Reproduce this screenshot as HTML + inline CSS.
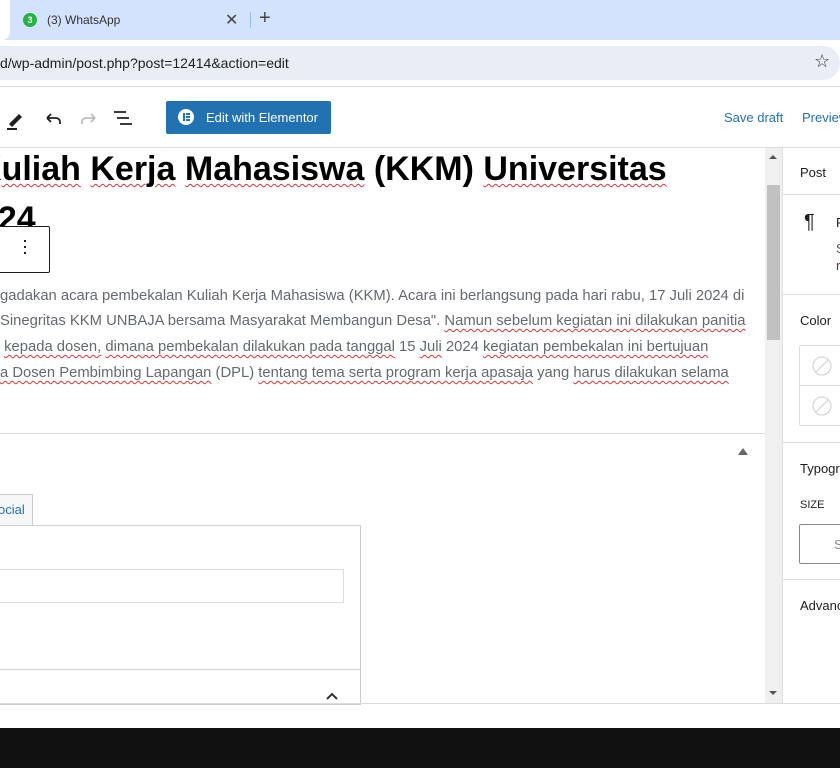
<!DOCTYPE html>
<html><head><meta charset="utf-8"><style>
*{margin:0;padding:0;box-sizing:border-box}
body{width:840px;height:768px;overflow:hidden;background:#fff;font-family:"Liberation Sans",sans-serif;position:relative}
.a{position:absolute;white-space:nowrap}
.p{font-size:14.8px;color:#646970;left:0}
.w{text-decoration:underline wavy #d63638;text-decoration-thickness:1px;text-underline-offset:3px}
</style></head><body>
<div class="a" style="left:0;top:0;width:840px;height:40px;background:#d3e3fd"></div>
<div class="a" style="left:0;top:0;width:10px;height:40px;background:#fff;border-bottom-right-radius:8px"></div>
<div class="a" style="left:23px;top:13px;width:14px;height:14px;border-radius:50%;background:#25b33e;color:#fff;font-size:9px;font-weight:bold;text-align:center;line-height:14px">3</div>
<div class="a" style="left:47px;top:13px;font-size:12px;color:#333">(3) WhatsApp</div>
<div class="a" style="left:225px;top:10px;font-size:16px;color:#444">✕</div>
<div class="a" style="left:250px;top:12px;width:1px;height:16px;background:#9ab9ee"></div>
<div class="a" style="left:259px;top:7px;font-size:20px;color:#444">+</div>
<div class="a" style="left:0;top:40px;width:840px;height:47px;background:#fff"></div>
<div class="a" style="left:-20px;top:46px;width:860px;height:34px;background:#e9eef6;border-radius:17px"></div>
<div class="a" style="left:0;top:55px;font-size:14px;color:#222">d/wp-admin/post.php?post=12414&amp;action=edit</div>
<div class="a" style="left:814px;top:51px;font-size:18px;color:#333">☆</div>
<div class="a" style="left:0;top:86px;width:840px;height:1px;background:#ddd"></div>
<svg class="a" style="left:0;top:104px" width="140" height="28">
<path d="M9 20 L19 10 L22 13 L12 23 Z" fill="#1e1e1e"/><rect x="7" y="24" width="10" height="2" fill="#1e1e1e"/>
<path d="M47 14 h9 a4 4 0 0 1 4 4 v2 M47 14 l4 -4 M47 14 l4 4" stroke="#1e1e1e" stroke-width="1.8" fill="none"/>
<path d="M95 14 h-9 a4 4 0 0 0 -4 4 v2 M95 14 l-4 -4 M95 14 l-4 4" stroke="#bbb" stroke-width="1.8" fill="none"/>
<path d="M114 8h12M117 14h12M120 20h12" stroke="#1e1e1e" stroke-width="1.8"/>
</svg>
<div class="a" style="left:166px;top:101px;width:165px;height:33px;background:#2271b1;border-radius:2px"></div>
<div class="a" style="left:178px;top:109px;width:16px;height:16px;border-radius:50%;background:#fff"></div>
<div class="a" style="left:183px;top:113px;width:2px;height:8px;background:#2271b1"></div>
<div class="a" style="left:186px;top:113px;width:4px;height:2px;background:#2271b1;box-shadow:0 3px #2271b1,0 6px #2271b1"></div>
<div class="a" style="left:206px;top:110px;font-size:13px;color:#fff">Edit with Elementor</div>
<div class="a" style="left:724px;top:110px;font-size:13px;color:#2271b1">Save draft</div>
<div class="a" style="left:802px;top:110px;font-size:13px;color:#2271b1">Preview</div>
<div class="a" style="left:0;top:147px;width:840px;height:1px;background:#ddd"></div>
<div class="a" style="left:-23px;top:150px;font-size:34px;font-weight:bold;color:#000">K<span class="w">uliah</span> <span class="w">Kerja</span> <span class="w">Mahasiswa</span> (KKM) <span class="w">Universitas</span></div>
<div class="a" style="left:-40px;top:200px;font-size:34px;font-weight:bold;color:#000">2024</div>
<div class="a" style="left:0;top:226px;width:50px;height:47px;background:#fff;border:1px solid #1e1e1e;border-left:none;border-radius:0 2px 2px 0"></div>
<div class="a" style="left:24px;top:240px;width:2px;height:2px;background:#1e1e1e;box-shadow:0 6px #1e1e1e,0 12px #1e1e1e"></div>
<div class="a p" style="top:288px">gadakan acara pembekalan Kuliah Kerja Mahasiswa (KKM). Acara ini berlangsung pada hari rabu, 17 Juli 2024 di</div>
<div class="a p" style="top:313px">Sinegritas KKM UNBAJA bersama Masyarakat Membangun Desa". <span class="w">Namun sebelum kegiatan ini dilakukan panitia</span></div>
<div class="a p" style="top:339px">&nbsp;<span class="w">kepada dosen,</span> <span class="w">dimana pembekalan dilakukan pada tanggal</span> 15 <span class="w">Juli</span> 2024 <span class="w">kegiatan pembekalan ini bertujuan</span></div>
<div class="a p" style="top:365px"><span class="w">a Dosen Pembimbing Lapangan</span> (DPL) <span class="w">tentang tema serta program kerja apasaja</span> yang <span class="w">harus dilakukan selama</span></div>
<div class="a" style="left:0;top:433px;width:765px;height:1px;background:#ddd"></div>
<div class="a" style="left:738px;top:448px;width:0;height:0;border-left:5px solid transparent;border-right:5px solid transparent;border-bottom:7px solid #666"></div>
<div class="a" style="left:0;top:494px;width:33px;height:32px;background:#f6f7f7;border:1px solid #ccc;border-left:none;border-bottom:none"></div>
<div class="a" style="left:-2px;top:502px;font-size:13px;color:#2271b1">ocial</div>
<div class="a" style="left:0;top:525px;width:361px;height:180px;border:1px solid #ccc;border-left:none"></div>
<div class="a" style="left:0;top:569px;width:344px;height:34px;border:1px solid #ddd;border-left:none"></div>
<div class="a" style="left:0;top:669px;width:361px;height:1px;background:#ccc"></div>
<svg class="a" style="left:325px;top:691px" width="14" height="10"><path d="M2 8 L7 3 L12 8" stroke="#333" stroke-width="2" fill="none"/></svg>
<div class="a" style="left:765px;top:148px;width:17px;height:555px;background:#f0f0f0"></div>
<div class="a" style="left:767px;top:185px;width:13px;height:155px;background:#c1c1c1"></div>
<div class="a" style="left:769px;top:155px;border-left:4px solid transparent;border-right:4px solid transparent;border-bottom:4px solid #555"></div>
<div class="a" style="left:769px;top:691px;border-left:4px solid transparent;border-right:4px solid transparent;border-top:4px solid #555"></div>
<div class="a" style="left:782px;top:148px;width:1px;height:555px;background:#e0e0e0"></div>
<div class="a" style="left:800px;top:165px;font-size:13px;color:#1e1e1e">Post</div>
<div class="a" style="left:783px;top:194px;width:57px;height:1px;background:#e0e0e0"></div>
<div class="a" style="left:804px;top:211px;font-size:20px;color:#1e1e1e">¶</div>
<div class="a" style="left:836px;top:215px;font-size:13px;color:#1e1e1e">P</div>
<div class="a" style="left:836px;top:241px;font-size:13px;color:#555">S</div>
<div class="a" style="left:836px;top:258px;font-size:13px;color:#8a2424">r</div>
<div class="a" style="left:783px;top:294px;width:57px;height:1px;background:#e0e0e0"></div>
<div class="a" style="left:800px;top:313px;font-size:13px;color:#1e1e1e">Color</div>
<div class="a" style="left:799px;top:345px;width:50px;height:81px;border:1px solid #ddd;border-radius:2px"></div>
<div class="a" style="left:799px;top:385px;width:41px;height:1px;background:#ddd"></div>
<svg class="a" style="left:812px;top:356px" width="20" height="62"><circle cx="10" cy="10" r="9" stroke="#ccc" fill="none"/><path d="M4 16L16 4" stroke="#ccc"/><circle cx="10" cy="50" r="9" stroke="#ccc" fill="none"/><path d="M4 56L16 44" stroke="#ccc"/></svg>
<div class="a" style="left:783px;top:442px;width:57px;height:1px;background:#e0e0e0"></div>
<div class="a" style="left:800px;top:461px;font-size:13px;color:#1e1e1e">Typography</div>
<div class="a" style="left:800px;top:499px;font-size:11px;color:#1e1e1e">SIZE</div>
<div class="a" style="left:799px;top:524px;width:50px;height:40px;border:1px solid #888;border-radius:2px"></div>
<div class="a" style="left:834px;top:537px;font-size:13px;color:#888">S</div>
<div class="a" style="left:783px;top:579px;width:57px;height:1px;background:#e0e0e0"></div>
<div class="a" style="left:800px;top:598px;font-size:13px;color:#1e1e1e">Advanced</div>
<div class="a" style="left:0;top:703px;width:840px;height:1px;background:#ddd"></div>
<div class="a" style="left:0;top:728px;width:840px;height:40px;background:#111"></div>
</body></html>
